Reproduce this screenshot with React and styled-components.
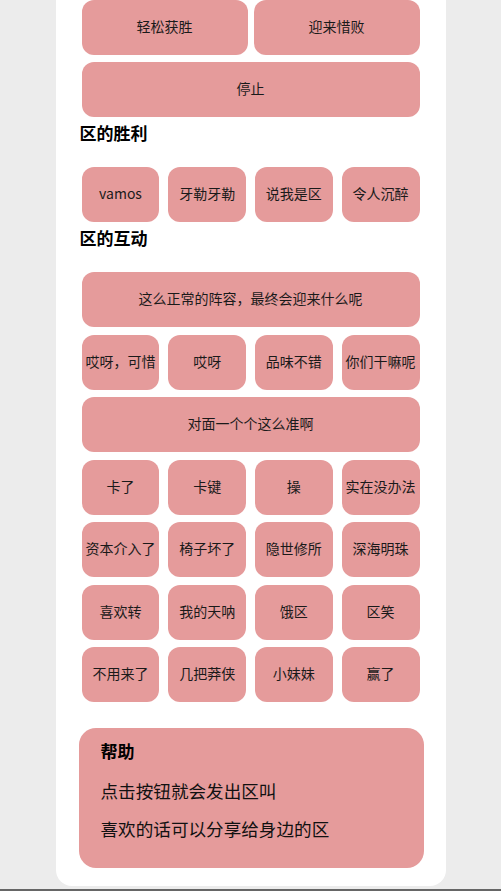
import React from "react";
import styled, { createGlobalStyle } from "styled-components";

const GlobalStyle = createGlobalStyle`
  html, body {
    margin: 0;
    padding: 0;
    background-color: #ececec;
    font-family: "Noto Sans CJK SC", "Noto Sans", sans-serif;
    color: #111;
  }
`;

const Page = styled.div`
  height: 889px;
  border-bottom: 2px solid #666;
  display: flex;
  justify-content: center;
  align-items: flex-start;
  overflow: hidden;
`;

const Card = styled.div`
  width: 390px;
  background-color: white;
  border-radius: 0 0 16px 16px;
  padding: 0 24px 18px 24px;
  box-sizing: border-box;
  display: flex;
  flex-direction: column;
`;

const ButtonGrid = styled.div`
  display: grid;
  grid-template-columns: repeat(${(p) => p.$cols}, 1fr);
  column-gap: ${(p) => p.$gap}px;
  row-gap: ${(p) => p.$rowGap ?? 7.5}px;
  margin: 0 2px;
`;

const SoundButton = styled.button`
  grid-column: ${(p) => (p.$wide ? "1 / -1" : "auto")};
  height: 55px;
  border: none;
  border-radius: 12px;
  background-color: #e59b9b;
  color: #1a1a1a;
  font-family: "Noto Sans CJK SC", "Noto Sans", sans-serif;
  font-size: 14px;
  padding: 0 0 3px 0;
  white-space: nowrap;
  display: flex;
  align-items: center;
  justify-content: center;
`;

const SectionTitle = styled.h2`
  margin: 4px 0 22px 0;
  font-size: 17px;
  line-height: 24px;
  font-weight: 700;
  color: #000;
`;

const HelpBox = styled.div`
  margin: 26px 0 0 -1px;
  width: 345px;
  height: 140px;
  box-sizing: border-box;
  background-color: #e59b9b;
  border-radius: 17px;
  padding: 11px 22px;
  display: flex;
  flex-direction: column;
`;

const HelpTitle = styled.h3`
  margin: 0;
  font-size: 17px;
  line-height: 24px;
  font-weight: 700;
  color: #000;
`;

const HelpLine = styled.p`
  margin: ${(p) => (p.$first ? "16px" : "14px")} 0 0 0;
  font-size: 17.6px;
  line-height: 24px;
  color: #111;
`;

const victory = ["vamos", "牙勒牙勒", "说我是区", "令人沉醉"];

const interact = [
  { t: "这么正常的阵容，最终会迎来什么呢", wide: true },
  { t: "哎呀，可惜" },
  { t: "哎呀" },
  { t: "品味不错" },
  { t: "你们干嘛呢" },
  { t: "对面一个个这么准啊", wide: true },
  { t: "卡了" },
  { t: "卡键" },
  { t: "操" },
  { t: "实在没办法" },
  { t: "资本介入了" },
  { t: "椅子坏了" },
  { t: "隐世修所" },
  { t: "深海明珠" },
  { t: "喜欢转" },
  { t: "我的天呐" },
  { t: "饿区" },
  { t: "区笑" },
  { t: "不用来了" },
  { t: "几把莽侠" },
  { t: "小妹妹" },
  { t: "赢了" },
];

export default function App() {
  return (
    <>
      <GlobalStyle />
      <Page>
        <Card>
          <ButtonGrid $cols={2} $gap={6} $rowGap={7}>
            <SoundButton>轻松获胜</SoundButton>
            <SoundButton>迎来惜败</SoundButton>
            <SoundButton $wide>停止</SoundButton>
          </ButtonGrid>

          <SectionTitle>区的胜利</SectionTitle>
          <ButtonGrid $cols={4} $gap={8.7}>
            {victory.map((t) => (
              <SoundButton key={t}>{t}</SoundButton>
            ))}
          </ButtonGrid>

          <SectionTitle>区的互动</SectionTitle>
          <ButtonGrid $cols={4} $gap={8.7}>
            {interact.map((b) => (
              <SoundButton key={b.t} $wide={b.wide}>
                {b.t}
              </SoundButton>
            ))}
          </ButtonGrid>

          <HelpBox>
            <HelpTitle>帮助</HelpTitle>
            <HelpLine $first>点击按钮就会发出区叫</HelpLine>
            <HelpLine>喜欢的话可以分享给身边的区</HelpLine>
          </HelpBox>
        </Card>
      </Page>
    </>
  );
}
